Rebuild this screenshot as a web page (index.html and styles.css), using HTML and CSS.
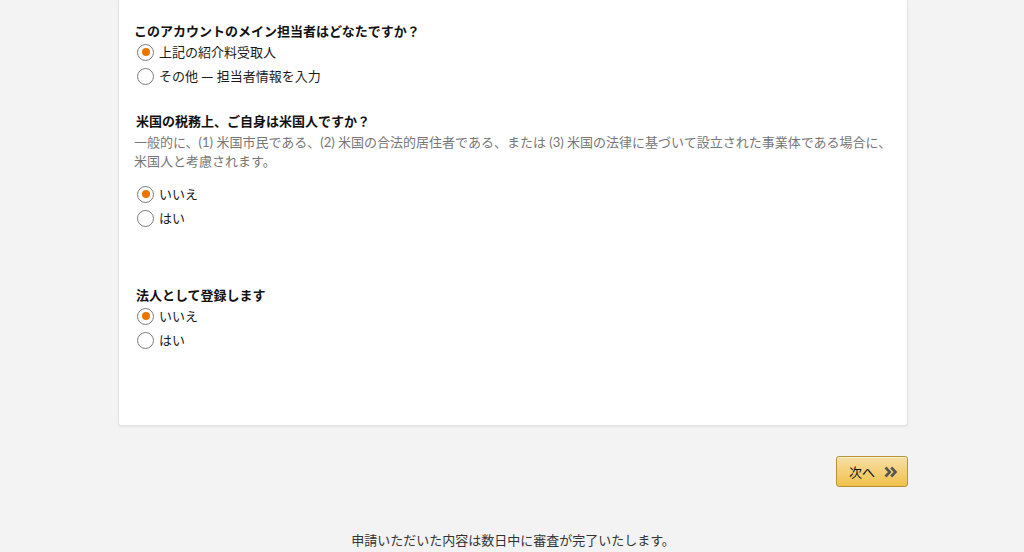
FILE: index.html
```html
<!DOCTYPE html>
<html lang="ja">
<head>
<meta charset="utf-8">
<link rel="stylesheet" href="styles.css">
</head>
<body>
<main class="page">
  <section class="card">
    <div class="group g1">
      <div class="q-title first">このアカウントのメイン担当者はどなたですか？</div>
      <label class="opt"><span class="radio checked"></span><span>上記の紹介料受取人</span></label>
      <label class="opt"><span class="radio"></span><span>その他 <span class="dash">—</span> 担当者情報を入力</span></label>
    </div>
    <div class="group g2">
      <div class="q-title">米国の税務上、ご自身は米国人ですか？</div>
      <p class="desc">一般的に、(1) 米国市民である、(2) 米国の合法的居住者である、または (3) 米国の法律に基づいて設立された事業体である場合に、米国人と考慮されます。</p>
      <label class="opt"><span class="radio checked"></span><span>いいえ</span></label>
      <label class="opt"><span class="radio"></span><span>はい</span></label>
    </div>
    <div class="group g3">
      <div class="q-title">法人として登録します</div>
      <label class="opt"><span class="radio checked"></span><span>いいえ</span></label>
      <label class="opt"><span class="radio"></span><span>はい</span></label>
    </div>
  </section>
  <div class="actions">
    <button class="next-btn" type="button"><span>次へ</span>
      <svg class="chev" width="14" height="12" viewBox="0 0 14 12" aria-hidden="true"><path d="M1.5 1.5 L5.8 6 L1.5 10.5 M7.2 1.5 L11.5 6 L7.2 10.5" fill="none" stroke="#555" stroke-width="2.6" stroke-linejoin="miter"/></svg>
    </button>
  </div>
  <p class="footer-note">申請いただいた内容は数日中に審査が完了いたします。</p>
</main>
</body>
</html>
```

FILE: styles.css
```css
* { box-sizing: border-box; }
html, body { margin: 0; padding: 0; }
body {
  background: #f3f3f3;
  font-family: Lato, "Noto Sans CJK JP", sans-serif;
  color: #111;
  font-size: 13px;
  width: 1024px;
  height: 552px;
  overflow: hidden;
}
.page {
  width: 790px;
  margin: 0 0 0 118px;
}
.card {
  background: #fff;
  border: 1px solid #e3e3e3;
  border-top: none;
  border-radius: 0 0 3px 3px;
  box-shadow: 0 1px 2px rgba(0,0,0,0.06);
  padding: 23px 4px 73px 15px;
  height: 426px;
}
.group { display: flex; flex-direction: column; }
.g2 { margin-top: 25px; }
.g3 { margin-top: 57px; }
.q-title {
  font-weight: 700;
  line-height: 17px;
  padding-left: 2px;
  color: #111;
}
.q-title.first { padding-left: 0; }
.desc {
  margin: 3px 0 11px 0;
  color: #767676;
  line-height: 19px;
  font-size: 13px;
}
.dash { font-family: "DejaVu Sans", sans-serif; font-size: 12px; }
.opt {
  display: flex;
  align-items: center;
  height: 24px;
  padding-left: 3px;
  gap: 5px;
  color: #1a1a1a;
  line-height: 18px;
}
.radio {
  width: 17px;
  height: 17px;
  border: 1px solid #7b7b7b;
  border-radius: 50%;
  display: flex;
  align-items: center;
  justify-content: center;
  background: #fff;
  flex: none;
}
.radio.checked::after {
  content: "";
  width: 8px;
  height: 8px;
  border-radius: 50%;
  background: #e77600;
}
.actions {
  display: flex;
  justify-content: flex-end;
  margin-top: 30px;
}
.next-btn {
  width: 72px;
  height: 31px;
  border: 1px solid #b89334;
  border-radius: 3px;
  background: linear-gradient(to bottom, #f7dfa5, #f0c14b);
  box-shadow: inset 0 1px 0 rgba(255,255,255,0.5);
  font-family: Lato, "Noto Sans CJK JP", sans-serif;
  font-size: 13px;
  color: #111;
  display: flex;
  align-items: center;
  justify-content: space-between;
  padding: 0 9px 0 12px;
  cursor: pointer;
}
.chev { display: block; }
.footer-note {
  margin: 44px 0 0 0;
  text-align: center;
  color: #333;
  line-height: 18px;
  font-size: 13px;
}
```
